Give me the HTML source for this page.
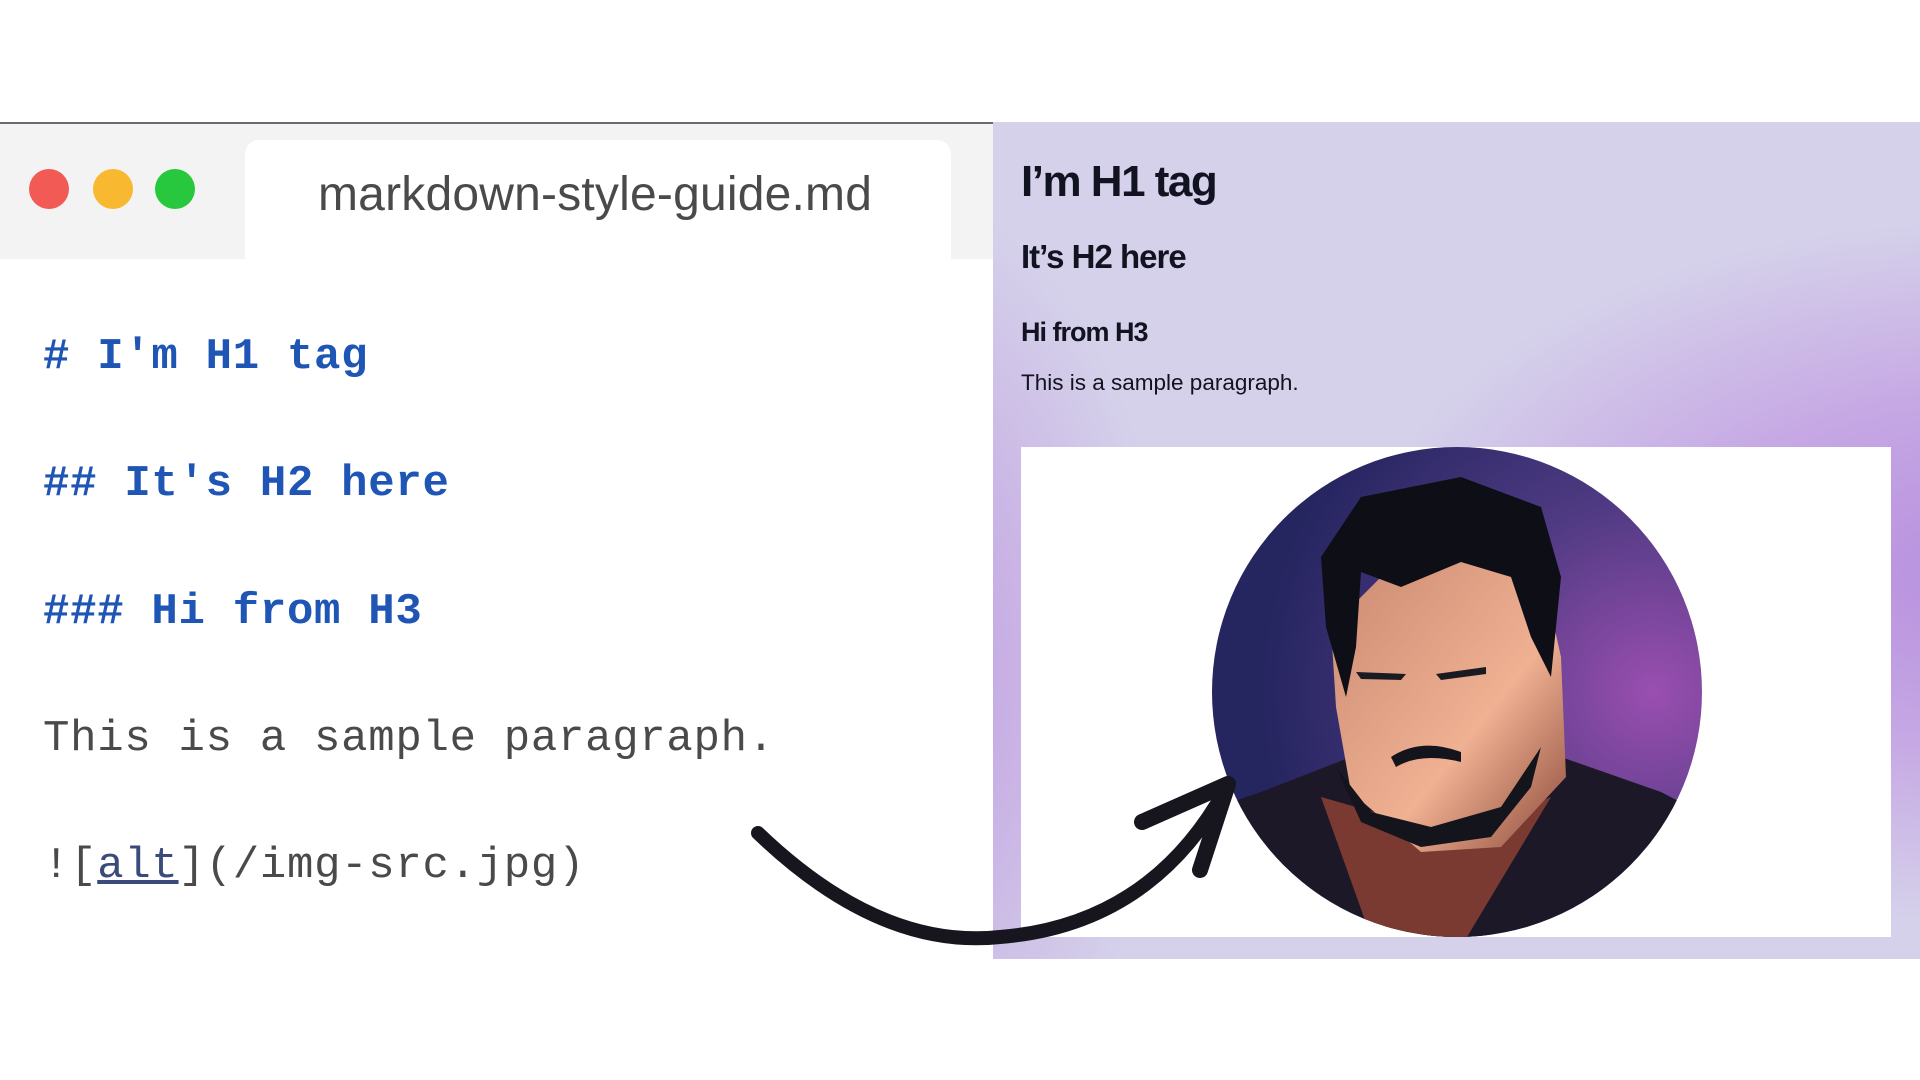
<!DOCTYPE html>
<html><head><meta charset="utf-8"><style>
*{margin:0;padding:0;box-sizing:border-box}
body{width:1920px;height:1080px;background:#fff;position:relative;overflow:hidden;font-family:"Liberation Sans",sans-serif}
.win{position:absolute;left:0;top:122px;width:993px;height:835px;background:#fff;border-top:2px solid #6a6a72}
.bar{position:absolute;left:0;top:0;width:993px;height:135px;background:#f3f3f3}
.tab{position:absolute;left:245px;top:16px;width:706px;height:119px;background:#fff;border-radius:14px 14px 0 0}
.dot{position:absolute;top:45px;width:40px;height:40px;border-radius:50%}
.title{position:absolute;left:318px;top:43px;font-size:48px;color:#4a4a4a;letter-spacing:0.2px}
.code{position:absolute;left:43px;font-family:"Liberation Mono",monospace;font-size:44px;letter-spacing:0.7px;white-space:pre}
.b{color:#1f55b4;font-weight:bold}
.g{color:#4a4a4a}
.right{position:absolute;left:993px;top:122px;width:927px;height:837px;
background:radial-gradient(ellipse 900px 500px at 1000px 450px,#b78fdf 0%,#c6a8e4 35%,rgba(213,209,234,0) 70%),radial-gradient(ellipse 350px 600px at -100px 550px,#bf9ae0,rgba(213,209,234,0) 80%),#d5d1ea}
.h{position:absolute;left:28px;color:#111320;font-weight:bold;letter-spacing:-1.5px}
.img{position:absolute;left:28px;top:325px;width:870px;height:490px;background:#fff;overflow:hidden}
</style></head><body>
<div class="win">
 <div class="bar"><div class="tab"></div>
  <div class="dot" style="left:29px;background:#f25a55"></div>
  <div class="dot" style="left:93px;background:#f8b931"></div>
  <div class="dot" style="left:155px;background:#27c73e"></div>
  <div class="title">markdown-style-guide.md</div>
 </div>
 <div class="code b" style="top:208px"># I'm H1 tag</div>
 <div class="code b" style="top:335px">## It's H2 here</div>
 <div class="code b" style="top:463px">### Hi from H3</div>
 <div class="code g" style="top:590px">This is a sample paragraph.</div>
 <div class="code g" style="top:717px">![<span style="text-decoration:underline;color:#3a4a7a">alt</span>](/img-src.jpg)</div>
</div>
<div class="right">
 <div class="h" style="top:35px;font-size:44px">I’m H1 tag</div>
 <div class="h" style="top:116px;font-size:33px;letter-spacing:-1px">It’s H2 here</div>
 <div class="h" style="top:195px;font-size:27px;letter-spacing:-1px">Hi from H3</div>
 <div class="h" style="top:248px;font-size:22.5px;font-weight:normal;letter-spacing:0">This is a sample paragraph.</div>
 <div class="img">
  <svg width="870" height="490" viewBox="0 0 870 490">
   <defs>
    <radialGradient id="bg" cx="0.9" cy="0.5" r="0.8"><stop offset="0" stop-color="#9a4fb0"/><stop offset="0.5" stop-color="#4e3a82"/><stop offset="1" stop-color="#252560"/></radialGradient>
    <linearGradient id="sk" x1="0" y1="0" x2="1" y2="1"><stop offset="0" stop-color="#c98a72"/><stop offset="0.6" stop-color="#f0b092"/><stop offset="1" stop-color="#8a4a3a"/></linearGradient>
    <clipPath id="c"><circle cx="436" cy="245" r="245"/></clipPath>
   </defs>
   <circle cx="436" cy="245" r="245" fill="url(#bg)"/>
   <g clip-path="url(#c)">
    <path d="M20 420 L240 345 L330 310 L540 310 L640 345 L860 460 L860 520 L20 520Z" fill="#1c1828"/>
    <path d="M300 350 L350 490 L440 500 L530 350 L440 390Z" fill="#7a3a32"/>
    <path d="M310 180 L360 130 L440 110 L520 120 L540 210 L545 330 L480 400 L400 405 L330 345 L315 260Z" fill="url(#sk)"/>
    <path d="M300 110 L340 50 L440 30 L520 60 L540 130 L530 230 L510 190 L490 130 L440 115 L380 140 L340 125 L335 200 L325 250 L305 180Z" fill="#0e0e16"/>
    <path d="M315 320 L350 365 L410 380 L480 360 L520 300 L510 340 L470 390 L400 400 L340 375Z" fill="#14141c"/>
    <path d="M370 310 Q400 290 440 305 L440 315 Q400 305 375 320Z" fill="#14141c"/>
    <path d="M335 225 L385 227 L380 233 L340 232Z M415 227 L465 220 L465 227 L420 233Z" fill="#1a1a22"/>
   </g>
  </svg>
 </div>
</div>
<svg style="position:absolute;left:0;top:0" width="1920" height="1080">
 <path d="M758 833 Q880 950 1000 937 Q1150 925 1225 790" fill="none" stroke="#17161f" stroke-width="14" stroke-linecap="round"/>
 <path d="M1142 822 L1228 784 L1200 870" fill="none" stroke="#17161f" stroke-width="16" stroke-linecap="round" stroke-linejoin="round"/>
</svg>
</body></html>
